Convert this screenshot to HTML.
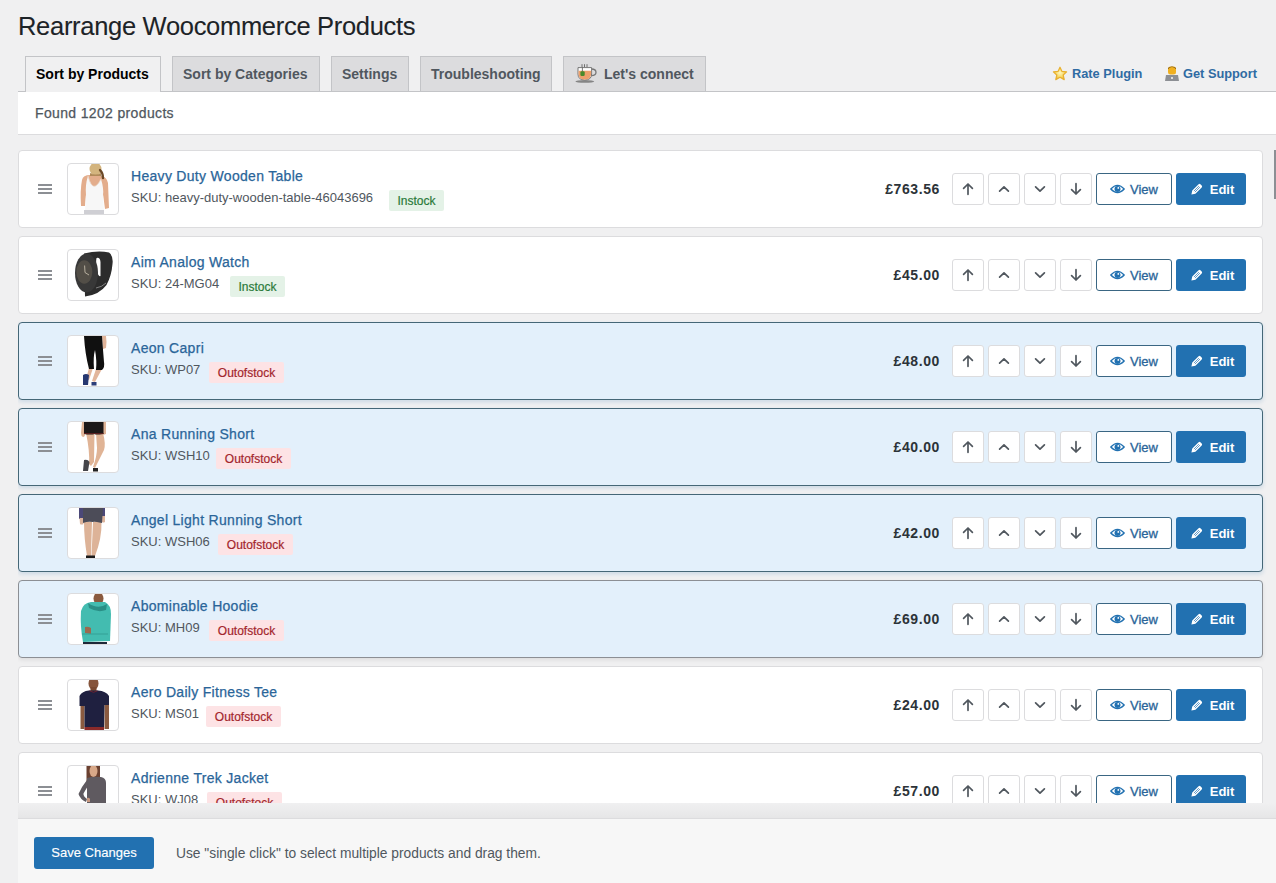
<!DOCTYPE html>
<html><head><meta charset="utf-8"><title>Rearrange Woocommerce Products</title>
<style>
*{box-sizing:border-box}
html,body{margin:0;padding:0}
body{width:1276px;height:883px;overflow:hidden;background:#f0f0f1;font-family:"Liberation Sans",sans-serif;position:relative;color:#3c434a}
.abs{position:absolute}
h1{position:absolute;left:18px;top:10px;margin:0;font-size:25.5px;letter-spacing:-.3px;font-weight:400;line-height:32px;color:#1d2327;white-space:nowrap;-webkit-text-stroke:.1px #1d2327}
.tabline{position:absolute;left:18px;top:91px;width:1258px;height:1px;background:#c3c4c7}
.tab{position:absolute;top:56px;height:35px;border:1px solid #c3c4c7;border-bottom:none;background:#dcdcde;color:#50575e;font-weight:700;font-size:14px;line-height:34px;white-space:nowrap;padding-left:10px}
.tab.active{background:#f0f0f1;color:#000;height:36px}
.rlink{position:absolute;top:61px;font-size:12.8px;font-weight:700;color:#2f6ba3;line-height:26px;white-space:nowrap}
.found{position:absolute;left:18px;top:92px;width:1258px;height:43px;background:#fff;border-bottom:1px solid #dcdcde}
.found span{position:absolute;left:17px;top:12px;font-size:14px;line-height:18px;color:#50575e;letter-spacing:.35px;-webkit-text-stroke:.25px #50575e}
.list{position:absolute;left:18px;top:135px;width:1258px;height:668px;overflow:hidden}
.item{position:absolute;left:0;width:1245px;height:78px;background:#fff;border:1px solid #dcdcde;border-radius:4px}
.item.sel{background:#e3f0fb;border-color:#456777;box-shadow:0 2px 4px rgba(34,113,177,.18)}
.item.sel.last{border-color:#8c8f94;box-shadow:0 2px 4px rgba(0,0,0,.08)}
.ham{position:absolute;left:19px;top:33px;width:14px;height:10px}
.ham i{display:block;height:2px;background:#8c8f94;margin-bottom:2px}
.thumb{position:absolute;left:48px;top:12px;width:52px;height:52px;border:1px solid #dcdcde;border-radius:4px;background:#fff;overflow:hidden}
.thumb svg{display:block}
.title{position:absolute;left:112px;top:17px;font-size:14px;line-height:16px;color:#2a6599;white-space:nowrap;letter-spacing:.3px;-webkit-text-stroke:.25px #2a6599}
.sku{position:absolute;left:112px;top:39px;font-size:13px;line-height:15px;color:#50575e;white-space:nowrap}
.badge{position:absolute;top:39px;height:21px;border-radius:2px;font-size:12px;line-height:22px;text-align:center;white-space:nowrap}
.badge.in{background:#e4f2e7;color:#2a7a3a;-webkit-text-stroke:.2px #2a7a3a}
.badge.out{background:#fde3e5;color:#a3262d;-webkit-text-stroke:.2px #a3262d}
.price{position:absolute;right:322px;top:30px;font-size:14px;font-weight:700;line-height:16px;color:#2c3338;white-space:nowrap;letter-spacing:.6px}
.btn{position:absolute;top:22px;width:32px;height:32px;border:1px solid #dcdcde;border-radius:3px;background:#fff;display:flex;align-items:center;justify-content:center}
.btn svg{display:block}
.b1{left:933px}.b2{left:969px}.b3{left:1005px}.b4{left:1041px}
.view{position:absolute;left:1077px;top:22px;width:76px;height:32px;border:1px solid #3a6683;border-radius:3px;background:#fff;color:#2a6599;font-size:13px;display:flex;align-items:center;justify-content:center;gap:5px;-webkit-text-stroke:.3px #2a6599}
.view svg,.edit svg{display:block}
.edit{position:absolute;left:1157px;top:22px;width:70px;height:32px;border-radius:3px;background:#2271b1;color:#fff;font-size:13px;font-weight:700;display:flex;align-items:center;justify-content:center;gap:7px;padding-left:3px}
.scroll{position:absolute;left:1274px;top:150px;width:2px;height:49px;background:#8c8f94}
.shadow{position:absolute;left:18px;top:803px;width:1258px;height:15px;background:linear-gradient(#f0f0f1,#e6e6e7)}
.footer{position:absolute;left:18px;top:818px;width:1258px;height:65px;background:#f7f7f7;border-top:1px solid #dcdcde}
.save{position:absolute;left:16px;top:18px;width:120px;height:32px;background:#2271b1;border-radius:3px;color:#fff;font-size:13px;line-height:32px;text-align:center;-webkit-text-stroke:.15px #fff}
.hint{position:absolute;left:158px;top:27px;font-size:13.8px;line-height:16px;color:#50575e;white-space:nowrap}
</style></head>
<body>
<h1>Rearrange Woocommerce Products</h1>
<div class="tabline"></div>
<div class="tab active" style="left:25px;width:136px">Sort by Products</div>
<div class="tab" style="left:172px;width:148px">Sort by Categories</div>
<div class="tab" style="left:331px;width:78px">Settings</div>
<div class="tab" style="left:420px;width:132px">Troubleshooting</div>
<div class="tab" style="left:563px;width:143px;padding-left:40px">Let's connect</div>
<svg width="22" height="21" viewBox="0 0 22 21" style="position:absolute;left:575px;top:62px"><path d="M7 2.2V5.2M9.5 2.2V5.2M12 2.2V5.2" stroke="#555" stroke-width="0.8"/><path d="M16.5 7Q21 7 21 10.2Q21 13.6 16.3 13.6" stroke="#777" stroke-width="1.3" fill="none"/><path d="M3 5.6H16.6V12Q16.6 18 9.8 18Q3 18 3 12z" fill="#fff" stroke="#6a6a6a" stroke-width="0.9"/><path d="M3.5 8.8H16.1V12Q16.1 17.5 9.8 17.5Q3.5 17.5 3.5 12z" fill="#eea06c"/><path d="M7.4 5.6V9.5" stroke="#444" stroke-width="0.7"/><rect x="5.4" y="9.3" width="4.3" height="4.6" rx="1.2" fill="#4a8a2a"/><ellipse cx="9.8" cy="19.4" rx="9.4" ry="1.4" fill="#858585"/></svg>
<svg width="16" height="15" viewBox="0 0 16 15" style="position:absolute;left:1052px;top:66px"><defs><radialGradient id="sg" cx="0.5" cy="0.45" r="0.6"><stop offset="0" stop-color="#fff7c0"/><stop offset="0.6" stop-color="#f7d860"/><stop offset="1" stop-color="#e0a020"/></radialGradient></defs><path d="M8 1.2L10 5.4L14.6 5.9L11.2 9L12.2 13.6L8 11.3L3.8 13.6L4.8 9L1.4 5.9L6 5.4z" fill="url(#sg)" stroke="#e8b030" stroke-width="1.2" stroke-linejoin="round"/></svg><div class="rlink" style="left:1072px">Rate Plugin</div>
<svg width="14" height="15" viewBox="0 0 14 15" style="position:absolute;left:1165px;top:66px"><rect x="3" y="0.5" width="8" height="8" rx="2.5" fill="#f0b020"/><path d="M3 3q4 -4 8 0v-1q-4 -3 -8 0z" fill="#6b4a10"/><path d="M1 9h12l1 6h-14z" fill="#8c8f94"/><rect x="6" y="11" width="2" height="2" fill="#ddd"/></svg><div class="rlink" style="left:1183px">Get Support</div>
<div class="found"><span>Found 1202 products</span></div>
<div class="list">
<div class="item" style="top:15px">
<div class="ham"><i></i><i></i><i></i></div>
<div class="thumb"><svg width="50" height="50" viewBox="0 0 50 50"><path d="M14 16 Q15 11 22 11 L33 12 Q39 13 40 19 L41 44 L37 45 L35 30 L18 30 L17 42 L13 42 Q12 26 14 16z" fill="#e3ad8c"/><ellipse cx="27.5" cy="5" rx="6" ry="6.5" fill="#d3b47e"/><path d="M22 9 Q27.5 12 33 9 L33 12 L22 12z" fill="#b08a5a"/><path d="M32 6 Q35 9 35 14" stroke="#6b4826" stroke-width="2.4" fill="none" stroke-linecap="round"/><path d="M20 12 Q25 31 33 15 Q36 25 35 31 L36 47 L17 47 L18 31 Q17 21 20 12z" fill="#f7f7f7"/><path d="M20 12 Q25 31 33 15" stroke="#e8d8cc" stroke-width="0.8" fill="none"/><rect x="16" y="46" width="20" height="4" fill="#cfcfd4"/></svg></div>
<div class="title">Heavy Duty Wooden Table</div>
<div class="sku">SKU: heavy-duty-wooden-table-46043696</div>
<div class="badge in" style="left:370px;width:55px">Instock</div>
<div class="price">£763.56</div>
<div class="btn b1"><svg width="14" height="14" viewBox="0 0 14 14"><path d="M7 12.3V2M2.6 6.4L7 2L11.4 6.4" stroke="#50575e" stroke-width="1.7" fill="none" stroke-linecap="round" stroke-linejoin="round"/></svg></div><div class="btn b2"><svg width="14" height="14" viewBox="0 0 14 14"><path d="M2.6 9.2L7 4.8L11.4 9.2" stroke="#50575e" stroke-width="1.7" fill="none" stroke-linecap="round" stroke-linejoin="round"/></svg></div><div class="btn b3"><svg width="14" height="14" viewBox="0 0 14 14"><path d="M2.6 4.8L7 9.2L11.4 4.8" stroke="#50575e" stroke-width="1.7" fill="none" stroke-linecap="round" stroke-linejoin="round"/></svg></div><div class="btn b4"><svg width="14" height="14" viewBox="0 0 14 14"><path d="M7 1.7V12M2.6 7.6L7 12L11.4 7.6" stroke="#50575e" stroke-width="1.7" fill="none" stroke-linecap="round" stroke-linejoin="round"/></svg></div>
<div class="view"><svg width="15" height="10" viewBox="0 0 15 10"><path d="M0.8 5 Q7.5 -2.2 14.2 5 Q7.5 12.2 0.8 5z" fill="#fff" stroke="#2271b1" stroke-width="1.3"/><circle cx="7.5" cy="5" r="3" fill="#2271b1"/><circle cx="8.3" cy="3.9" r="0.9" fill="#fff"/></svg><span>View</span></div>
<div class="edit"><svg width="12" height="12" viewBox="0 0 12 12"><path d="M0.4 11.6L1.3 7.6L7.6 1.3Q8.5 0.4 9.4 1.3L10.7 2.6Q11.6 3.5 10.7 4.4L4.4 10.7z" fill="#fff"/><path d="M2.9 8.1L7.9 3.1M3.9 9.1L8.9 4.1" stroke="#2271b1" stroke-width="0.7"/></svg><span>Edit</span></div>
</div><div class="item" style="top:101px">
<div class="ham"><i></i><i></i><i></i></div>
<div class="thumb"><svg width="50" height="50" viewBox="0 0 50 50"><path d="M16 3.5Q30 0 41 2.5Q45.5 6 44.5 14Q43.5 26 38.5 35Q31 45 17 46.5z" fill="#2c2c2c"/><path d="M28.5 8Q32 7 32.5 12L32.5 26Q30 27 29 20Q27.5 12 28.5 8z" fill="#fff"/><path d="M28 38Q34 37 38 33" stroke="#8a8a8a" stroke-width="0.9" fill="none"/><ellipse cx="18.5" cy="23" rx="11.5" ry="19.5" fill="#383838"/><ellipse cx="16.3" cy="22" rx="8" ry="11.7" fill="#524e47"/><path d="M17 22.5L16.6 15.5M17 22.5L21 25" stroke="#cfc6b4" stroke-width="0.8"/></svg></div>
<div class="title">Aim Analog Watch</div>
<div class="sku">SKU: 24-MG04</div>
<div class="badge in" style="left:211px;width:55px">Instock</div>
<div class="price">£45.00</div>
<div class="btn b1"><svg width="14" height="14" viewBox="0 0 14 14"><path d="M7 12.3V2M2.6 6.4L7 2L11.4 6.4" stroke="#50575e" stroke-width="1.7" fill="none" stroke-linecap="round" stroke-linejoin="round"/></svg></div><div class="btn b2"><svg width="14" height="14" viewBox="0 0 14 14"><path d="M2.6 9.2L7 4.8L11.4 9.2" stroke="#50575e" stroke-width="1.7" fill="none" stroke-linecap="round" stroke-linejoin="round"/></svg></div><div class="btn b3"><svg width="14" height="14" viewBox="0 0 14 14"><path d="M2.6 4.8L7 9.2L11.4 4.8" stroke="#50575e" stroke-width="1.7" fill="none" stroke-linecap="round" stroke-linejoin="round"/></svg></div><div class="btn b4"><svg width="14" height="14" viewBox="0 0 14 14"><path d="M7 1.7V12M2.6 7.6L7 12L11.4 7.6" stroke="#50575e" stroke-width="1.7" fill="none" stroke-linecap="round" stroke-linejoin="round"/></svg></div>
<div class="view"><svg width="15" height="10" viewBox="0 0 15 10"><path d="M0.8 5 Q7.5 -2.2 14.2 5 Q7.5 12.2 0.8 5z" fill="#fff" stroke="#2271b1" stroke-width="1.3"/><circle cx="7.5" cy="5" r="3" fill="#2271b1"/><circle cx="8.3" cy="3.9" r="0.9" fill="#fff"/></svg><span>View</span></div>
<div class="edit"><svg width="12" height="12" viewBox="0 0 12 12"><path d="M0.4 11.6L1.3 7.6L7.6 1.3Q8.5 0.4 9.4 1.3L10.7 2.6Q11.6 3.5 10.7 4.4L4.4 10.7z" fill="#fff"/><path d="M2.9 8.1L7.9 3.1M3.9 9.1L8.9 4.1" stroke="#2271b1" stroke-width="0.7"/></svg><span>Edit</span></div>
</div><div class="item sel" style="top:187px">
<div class="ham"><i></i><i></i><i></i></div>
<div class="thumb"><svg width="50" height="50" viewBox="0 0 50 50"><path d="M34 0 h4 q1 6 0 12 l-3 1z" fill="#e0b49a"/><path d="M21 32 L25 32 L21 44 L18 43z M28 33 L34 33 L27 46 L24 45z" fill="#e2b69c"/><path d="M16 0 H34 Q35 14 36 26 Q37 31 34 34 L28 34 Q29 25 27 14 Q25 21 26 33 L21 33 Q17 18 16 0z" fill="#101010"/><path d="M15 39 Q18 37 21 39 L20 49 L15 49z" fill="#263770"/><path d="M23.5 46 h5 v3.5 h-5z" fill="#2d3f7a"/></svg></div>
<div class="title">Aeon Capri</div>
<div class="sku">SKU: WP07</div>
<div class="badge out" style="left:190px;width:75px">Outofstock</div>
<div class="price">£48.00</div>
<div class="btn b1"><svg width="14" height="14" viewBox="0 0 14 14"><path d="M7 12.3V2M2.6 6.4L7 2L11.4 6.4" stroke="#50575e" stroke-width="1.7" fill="none" stroke-linecap="round" stroke-linejoin="round"/></svg></div><div class="btn b2"><svg width="14" height="14" viewBox="0 0 14 14"><path d="M2.6 9.2L7 4.8L11.4 9.2" stroke="#50575e" stroke-width="1.7" fill="none" stroke-linecap="round" stroke-linejoin="round"/></svg></div><div class="btn b3"><svg width="14" height="14" viewBox="0 0 14 14"><path d="M2.6 4.8L7 9.2L11.4 4.8" stroke="#50575e" stroke-width="1.7" fill="none" stroke-linecap="round" stroke-linejoin="round"/></svg></div><div class="btn b4"><svg width="14" height="14" viewBox="0 0 14 14"><path d="M7 1.7V12M2.6 7.6L7 12L11.4 7.6" stroke="#50575e" stroke-width="1.7" fill="none" stroke-linecap="round" stroke-linejoin="round"/></svg></div>
<div class="view"><svg width="15" height="10" viewBox="0 0 15 10"><path d="M0.8 5 Q7.5 -2.2 14.2 5 Q7.5 12.2 0.8 5z" fill="#fff" stroke="#2271b1" stroke-width="1.3"/><circle cx="7.5" cy="5" r="3" fill="#2271b1"/><circle cx="8.3" cy="3.9" r="0.9" fill="#fff"/></svg><span>View</span></div>
<div class="edit"><svg width="12" height="12" viewBox="0 0 12 12"><path d="M0.4 11.6L1.3 7.6L7.6 1.3Q8.5 0.4 9.4 1.3L10.7 2.6Q11.6 3.5 10.7 4.4L4.4 10.7z" fill="#fff"/><path d="M2.9 8.1L7.9 3.1M3.9 9.1L8.9 4.1" stroke="#2271b1" stroke-width="0.7"/></svg><span>Edit</span></div>
</div><div class="item sel" style="top:273px">
<div class="ham"><i></i><i></i><i></i></div>
<div class="thumb"><svg width="50" height="50" viewBox="0 0 50 50"><path d="M14 0 h3 v12 q0 3 -2 3 q-2 -1 -2 -4z M34.5 0 h3.5 v12 l-3 1z" fill="#dfb497"/><path d="M18 11 L26.5 11 L26 40 L23 44 L21 42 Q22 30 18 11z M28 11 L35 11 Q38 22 36 28 L27 46 L25 45 Q29 34 29 26z" fill="#e0b496"/><path d="M16 0 H35.5 L35.5 12 Q26 13 27 12 Q22 13 16 12z" fill="#1c1818"/><path d="M16 11.5 H35.5" stroke="#5a2020" stroke-width="1"/><path d="M16 38 Q20 37 21.5 40 L20 49 L15 49z" fill="#45454a"/><path d="M25 46 h5 v3.5 h-5z" fill="#222"/></svg></div>
<div class="title">Ana Running Short</div>
<div class="sku">SKU: WSH10</div>
<div class="badge out" style="left:197px;width:75px">Outofstock</div>
<div class="price">£40.00</div>
<div class="btn b1"><svg width="14" height="14" viewBox="0 0 14 14"><path d="M7 12.3V2M2.6 6.4L7 2L11.4 6.4" stroke="#50575e" stroke-width="1.7" fill="none" stroke-linecap="round" stroke-linejoin="round"/></svg></div><div class="btn b2"><svg width="14" height="14" viewBox="0 0 14 14"><path d="M2.6 9.2L7 4.8L11.4 9.2" stroke="#50575e" stroke-width="1.7" fill="none" stroke-linecap="round" stroke-linejoin="round"/></svg></div><div class="btn b3"><svg width="14" height="14" viewBox="0 0 14 14"><path d="M2.6 4.8L7 9.2L11.4 4.8" stroke="#50575e" stroke-width="1.7" fill="none" stroke-linecap="round" stroke-linejoin="round"/></svg></div><div class="btn b4"><svg width="14" height="14" viewBox="0 0 14 14"><path d="M7 1.7V12M2.6 7.6L7 12L11.4 7.6" stroke="#50575e" stroke-width="1.7" fill="none" stroke-linecap="round" stroke-linejoin="round"/></svg></div>
<div class="view"><svg width="15" height="10" viewBox="0 0 15 10"><path d="M0.8 5 Q7.5 -2.2 14.2 5 Q7.5 12.2 0.8 5z" fill="#fff" stroke="#2271b1" stroke-width="1.3"/><circle cx="7.5" cy="5" r="3" fill="#2271b1"/><circle cx="8.3" cy="3.9" r="0.9" fill="#fff"/></svg><span>View</span></div>
<div class="edit"><svg width="12" height="12" viewBox="0 0 12 12"><path d="M0.4 11.6L1.3 7.6L7.6 1.3Q8.5 0.4 9.4 1.3L10.7 2.6Q11.6 3.5 10.7 4.4L4.4 10.7z" fill="#fff"/><path d="M2.9 8.1L7.9 3.1M3.9 9.1L8.9 4.1" stroke="#2271b1" stroke-width="0.7"/></svg><span>Edit</span></div>
</div><div class="item sel" style="top:359px">
<div class="ham"><i></i><i></i><i></i></div>
<div class="thumb"><svg width="50" height="50" viewBox="0 0 50 50"><path d="M11 0 h4 v11 h-4z M34 0 h3 v8 h-3z" fill="#4b4878"/><path d="M11.5 10 h3.5 l0.5 6 q-2 1 -3.5 0z M34 8 h3 v6 q-2 1 -3 0z" fill="#dcb49c"/><path d="M16 14 L24 14 L23 48 L19 48 Q16 30 16 14z M25 14 L33.5 14 Q34 30 27 48 L23.5 48z" fill="#ddb398"/><path d="M15 0 H35 L34 15 Q25 13 25 14 Q20 13 15 15z" fill="#4c4c58"/><path d="M18 47.5 h9 v2.5 h-9z" fill="#1a1a1a"/></svg></div>
<div class="title">Angel Light Running Short</div>
<div class="sku">SKU: WSH06</div>
<div class="badge out" style="left:199px;width:75px">Outofstock</div>
<div class="price">£42.00</div>
<div class="btn b1"><svg width="14" height="14" viewBox="0 0 14 14"><path d="M7 12.3V2M2.6 6.4L7 2L11.4 6.4" stroke="#50575e" stroke-width="1.7" fill="none" stroke-linecap="round" stroke-linejoin="round"/></svg></div><div class="btn b2"><svg width="14" height="14" viewBox="0 0 14 14"><path d="M2.6 9.2L7 4.8L11.4 9.2" stroke="#50575e" stroke-width="1.7" fill="none" stroke-linecap="round" stroke-linejoin="round"/></svg></div><div class="btn b3"><svg width="14" height="14" viewBox="0 0 14 14"><path d="M2.6 4.8L7 9.2L11.4 4.8" stroke="#50575e" stroke-width="1.7" fill="none" stroke-linecap="round" stroke-linejoin="round"/></svg></div><div class="btn b4"><svg width="14" height="14" viewBox="0 0 14 14"><path d="M7 1.7V12M2.6 7.6L7 12L11.4 7.6" stroke="#50575e" stroke-width="1.7" fill="none" stroke-linecap="round" stroke-linejoin="round"/></svg></div>
<div class="view"><svg width="15" height="10" viewBox="0 0 15 10"><path d="M0.8 5 Q7.5 -2.2 14.2 5 Q7.5 12.2 0.8 5z" fill="#fff" stroke="#2271b1" stroke-width="1.3"/><circle cx="7.5" cy="5" r="3" fill="#2271b1"/><circle cx="8.3" cy="3.9" r="0.9" fill="#fff"/></svg><span>View</span></div>
<div class="edit"><svg width="12" height="12" viewBox="0 0 12 12"><path d="M0.4 11.6L1.3 7.6L7.6 1.3Q8.5 0.4 9.4 1.3L10.7 2.6Q11.6 3.5 10.7 4.4L4.4 10.7z" fill="#fff"/><path d="M2.9 8.1L7.9 3.1M3.9 9.1L8.9 4.1" stroke="#2271b1" stroke-width="0.7"/></svg><span>Edit</span></div>
</div><div class="item sel last" style="top:445px">
<div class="ham"><i></i><i></i><i></i></div>
<div class="thumb"><svg width="50" height="50" viewBox="0 0 50 50"><ellipse cx="30.5" cy="4.5" rx="5" ry="6" fill="#8a5a3f"/><path d="M13 17 Q15 9 23 8 L37 8 Q43 11 43 20 L42 47 L15 48 Q12 32 13 17z" fill="#43bcb0"/><path d="M20 9 Q30 16 39 10 L38 16 Q30 19 21 14z" fill="#2a8f86"/><path d="M17 33 q3 -1 6 1 l0 6 l-6 -1z" fill="#9a6a50"/><path d="M14 40 h26" stroke="#34a096" stroke-width="1"/><rect x="15" y="48" width="24" height="2" fill="#1e2838"/></svg></div>
<div class="title">Abominable Hoodie</div>
<div class="sku">SKU: MH09</div>
<div class="badge out" style="left:190px;width:75px">Outofstock</div>
<div class="price">£69.00</div>
<div class="btn b1"><svg width="14" height="14" viewBox="0 0 14 14"><path d="M7 12.3V2M2.6 6.4L7 2L11.4 6.4" stroke="#50575e" stroke-width="1.7" fill="none" stroke-linecap="round" stroke-linejoin="round"/></svg></div><div class="btn b2"><svg width="14" height="14" viewBox="0 0 14 14"><path d="M2.6 9.2L7 4.8L11.4 9.2" stroke="#50575e" stroke-width="1.7" fill="none" stroke-linecap="round" stroke-linejoin="round"/></svg></div><div class="btn b3"><svg width="14" height="14" viewBox="0 0 14 14"><path d="M2.6 4.8L7 9.2L11.4 4.8" stroke="#50575e" stroke-width="1.7" fill="none" stroke-linecap="round" stroke-linejoin="round"/></svg></div><div class="btn b4"><svg width="14" height="14" viewBox="0 0 14 14"><path d="M7 1.7V12M2.6 7.6L7 12L11.4 7.6" stroke="#50575e" stroke-width="1.7" fill="none" stroke-linecap="round" stroke-linejoin="round"/></svg></div>
<div class="view"><svg width="15" height="10" viewBox="0 0 15 10"><path d="M0.8 5 Q7.5 -2.2 14.2 5 Q7.5 12.2 0.8 5z" fill="#fff" stroke="#2271b1" stroke-width="1.3"/><circle cx="7.5" cy="5" r="3" fill="#2271b1"/><circle cx="8.3" cy="3.9" r="0.9" fill="#fff"/></svg><span>View</span></div>
<div class="edit"><svg width="12" height="12" viewBox="0 0 12 12"><path d="M0.4 11.6L1.3 7.6L7.6 1.3Q8.5 0.4 9.4 1.3L10.7 2.6Q11.6 3.5 10.7 4.4L4.4 10.7z" fill="#fff"/><path d="M2.9 8.1L7.9 3.1M3.9 9.1L8.9 4.1" stroke="#2271b1" stroke-width="0.7"/></svg><span>Edit</span></div>
</div><div class="item" style="top:531px">
<div class="ham"><i></i><i></i><i></i></div>
<div class="thumb"><svg width="50" height="50" viewBox="0 0 50 50"><ellipse cx="25.5" cy="3.5" rx="5" ry="6.5" fill="#86553c"/><rect x="22.5" y="7" width="6" height="5" fill="#7a4a32"/><path d="M12.5 25 h4 v24 h-4z M36.5 24 h4.5 v25 h-4.5z" fill="#8a5a40"/><path d="M11.5 16 Q14 11 21 10.5 L30 10.5 Q38 11 41 16 L41 25 L36.5 25 L36 47 L16.5 47 L16.5 26 L11.5 26z" fill="#1f2040"/><path d="M21.5 10.8 q4 3 8 0" stroke="#6a2030" stroke-width="1" fill="none"/><rect x="16.5" y="47" width="19.5" height="3" fill="#8a2a2a"/></svg></div>
<div class="title">Aero Daily Fitness Tee</div>
<div class="sku">SKU: MS01</div>
<div class="badge out" style="left:187px;width:75px">Outofstock</div>
<div class="price">£24.00</div>
<div class="btn b1"><svg width="14" height="14" viewBox="0 0 14 14"><path d="M7 12.3V2M2.6 6.4L7 2L11.4 6.4" stroke="#50575e" stroke-width="1.7" fill="none" stroke-linecap="round" stroke-linejoin="round"/></svg></div><div class="btn b2"><svg width="14" height="14" viewBox="0 0 14 14"><path d="M2.6 9.2L7 4.8L11.4 9.2" stroke="#50575e" stroke-width="1.7" fill="none" stroke-linecap="round" stroke-linejoin="round"/></svg></div><div class="btn b3"><svg width="14" height="14" viewBox="0 0 14 14"><path d="M2.6 4.8L7 9.2L11.4 4.8" stroke="#50575e" stroke-width="1.7" fill="none" stroke-linecap="round" stroke-linejoin="round"/></svg></div><div class="btn b4"><svg width="14" height="14" viewBox="0 0 14 14"><path d="M7 1.7V12M2.6 7.6L7 12L11.4 7.6" stroke="#50575e" stroke-width="1.7" fill="none" stroke-linecap="round" stroke-linejoin="round"/></svg></div>
<div class="view"><svg width="15" height="10" viewBox="0 0 15 10"><path d="M0.8 5 Q7.5 -2.2 14.2 5 Q7.5 12.2 0.8 5z" fill="#fff" stroke="#2271b1" stroke-width="1.3"/><circle cx="7.5" cy="5" r="3" fill="#2271b1"/><circle cx="8.3" cy="3.9" r="0.9" fill="#fff"/></svg><span>View</span></div>
<div class="edit"><svg width="12" height="12" viewBox="0 0 12 12"><path d="M0.4 11.6L1.3 7.6L7.6 1.3Q8.5 0.4 9.4 1.3L10.7 2.6Q11.6 3.5 10.7 4.4L4.4 10.7z" fill="#fff"/><path d="M2.9 8.1L7.9 3.1M3.9 9.1L8.9 4.1" stroke="#2271b1" stroke-width="0.7"/></svg><span>Edit</span></div>
</div><div class="item" style="top:617px">
<div class="ham"><i></i><i></i><i></i></div>
<div class="thumb"><svg width="50" height="50" viewBox="0 0 50 50"><path d="M18.5 0 H32 L32 16 L18.5 16z" fill="#6a4030"/><ellipse cx="25.5" cy="5" rx="4" ry="6" fill="#d8a888"/><path d="M19 12 Q25 10 33 11 Q38 12 38 17 L38 38 L19 38z" fill="#5f5a60"/><path d="M19 14 Q14 20 10.5 28 Q12 33 18 36 L19 33 Q15 30 15.5 27.5 Q18 23 20 20z" fill="#5f5a60"/><path d="M19 32 q2 -1 3 1 l0 3 l-3 0z" fill="#c89880"/></svg></div>
<div class="title">Adrienne Trek Jacket</div>
<div class="sku">SKU: WJ08</div>
<div class="badge out" style="left:188px;width:75px">Outofstock</div>
<div class="price">£57.00</div>
<div class="btn b1"><svg width="14" height="14" viewBox="0 0 14 14"><path d="M7 12.3V2M2.6 6.4L7 2L11.4 6.4" stroke="#50575e" stroke-width="1.7" fill="none" stroke-linecap="round" stroke-linejoin="round"/></svg></div><div class="btn b2"><svg width="14" height="14" viewBox="0 0 14 14"><path d="M2.6 9.2L7 4.8L11.4 9.2" stroke="#50575e" stroke-width="1.7" fill="none" stroke-linecap="round" stroke-linejoin="round"/></svg></div><div class="btn b3"><svg width="14" height="14" viewBox="0 0 14 14"><path d="M2.6 4.8L7 9.2L11.4 4.8" stroke="#50575e" stroke-width="1.7" fill="none" stroke-linecap="round" stroke-linejoin="round"/></svg></div><div class="btn b4"><svg width="14" height="14" viewBox="0 0 14 14"><path d="M7 1.7V12M2.6 7.6L7 12L11.4 7.6" stroke="#50575e" stroke-width="1.7" fill="none" stroke-linecap="round" stroke-linejoin="round"/></svg></div>
<div class="view"><svg width="15" height="10" viewBox="0 0 15 10"><path d="M0.8 5 Q7.5 -2.2 14.2 5 Q7.5 12.2 0.8 5z" fill="#fff" stroke="#2271b1" stroke-width="1.3"/><circle cx="7.5" cy="5" r="3" fill="#2271b1"/><circle cx="8.3" cy="3.9" r="0.9" fill="#fff"/></svg><span>View</span></div>
<div class="edit"><svg width="12" height="12" viewBox="0 0 12 12"><path d="M0.4 11.6L1.3 7.6L7.6 1.3Q8.5 0.4 9.4 1.3L10.7 2.6Q11.6 3.5 10.7 4.4L4.4 10.7z" fill="#fff"/><path d="M2.9 8.1L7.9 3.1M3.9 9.1L8.9 4.1" stroke="#2271b1" stroke-width="0.7"/></svg><span>Edit</span></div>
</div>
</div>
<div class="scroll"></div>
<div class="shadow"></div>
<div class="footer"><div class="save">Save Changes</div><div class="hint">Use "single click" to select multiple products and drag them.</div></div>
</body></html>
